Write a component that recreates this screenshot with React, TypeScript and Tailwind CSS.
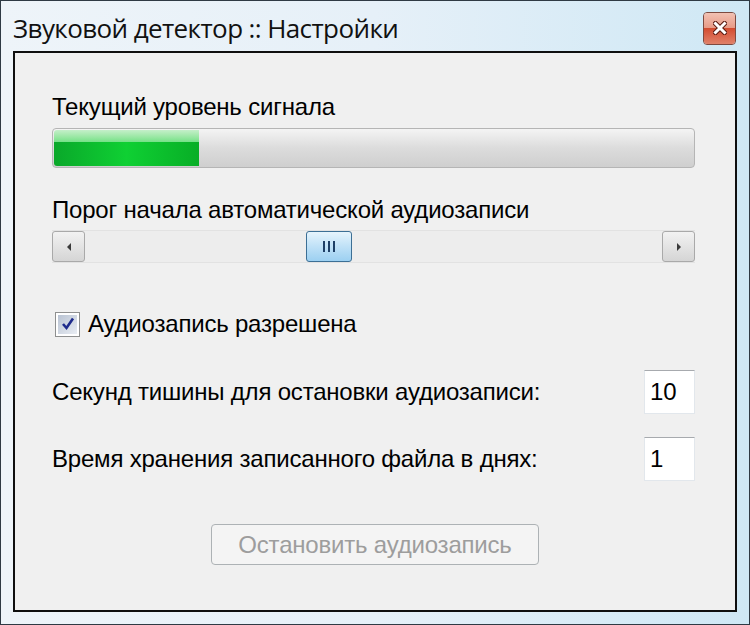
import React from "react";

const bodyFont = { fontFamily: '"Liberation Sans", Arial, sans-serif' };

function ArrowLeft() {
  return (
    <svg width="8" height="12" viewBox="0 0 8 12">
      <path d="M6 2 L2 6 L6 10 Z" fill="#3a3a3a" />
    </svg>
  );
}
function ArrowRight() {
  return (
    <svg width="8" height="12" viewBox="0 0 8 12">
      <path d="M2 2 L6 6 L2 10 Z" fill="#3a3a3a" />
    </svg>
  );
}

export default function App() {
  return (
    <div className="w-[750px] h-[625px] bg-[#2f3a44] p-[1px]">
      <div className="w-full h-full flex flex-col bg-gradient-to-r from-[#eef4f9] via-[#e6f0f8] to-[#cfe8f5]">
        {/* Title bar */}
        <div className="h-[50px] flex items-center justify-between pl-[12px] pr-[13px]">
          <div
            className="text-[26px] text-[#111] tracking-[-0.6px] leading-none mt-[4px]"
            style={{ fontFamily: '"Open Sans", "Liberation Sans", sans-serif' }}
          >
            Звуковой детектор :: Настройки
          </div>
          <div className="w-[33px] h-[33px] rounded-[4px] border border-[#7d4a40] overflow-hidden flex flex-col relative mt-[4px]">
            <div className="h-1/2 bg-gradient-to-b from-[#f2c1b3] to-[#e79a86]" />
            <div className="h-1/2 bg-gradient-to-b from-[#d24a2e] to-[#e0816a]" />
            <div className="absolute inset-0 flex items-center justify-center">
              <svg width="14" height="14" viewBox="0 0 14 14">
                <path d="M2.5 2.5 L11.5 11.5 M11.5 2.5 L2.5 11.5" stroke="#5a1a10" strokeWidth="5" strokeLinecap="square" />
                <path d="M2.5 2.5 L11.5 11.5 M11.5 2.5 L2.5 11.5" stroke="#ffffff" strokeWidth="3" strokeLinecap="square" />
              </svg>
            </div>
          </div>
        </div>
        {/* Content */}
        <div className="flex flex-1 px-[12px] pb-[12px]">
          <div
            className="flex-1 border-2 border-[#0f0f0f] bg-[#f0f0f0] pl-[37px] pr-[40px] flex flex-col"
            style={bodyFont}
          >
            <div className="mt-[40px] h-[28px] text-[24px] leading-[28px] text-black tracking-[-0.2px]">
              Текущий уровень сигнала
            </div>
            {/* progress */}
            <div className="mt-[7px] h-[40px] rounded-[4px] border border-[#b5b5b5] bg-gradient-to-b from-[#f4f4f4] via-[#dcdcdc] to-[#cfcfcf] p-[1px] flex">
              <div className="w-[145px] h-full rounded-l-[3px] flex flex-col overflow-hidden">
                <div className="h-[12px] bg-gradient-to-b from-[#c4efc9] to-[#74e187]" />
                <div className="flex-1 bg-gradient-to-r from-[#0aa82a] via-[#0fd033] to-[#08ae26]" />
              </div>
            </div>
            <div className="mt-[28px] h-[28px] text-[24px] leading-[28px] text-black tracking-[-0.2px]">
              Порог начала автоматической аудиозаписи
            </div>
            {/* scrollbar */}
            <div className="mt-[6px] h-[33px] flex items-stretch border-y border-[#e2e2e2] bg-[#ededed]">
              <div className="w-[33px] rounded-[3px] border border-[#a9a9a9] bg-gradient-to-b from-[#f2f2f2] to-[#d5d5d5] flex items-center justify-center">
                <ArrowLeft />
              </div>
              <div className="flex-1 flex items-stretch">
                <div className="w-[221px]" />
                <div className="w-[46px] rounded-[3px] border border-[#3c6f95] bg-gradient-to-b from-[#e6f4fc] via-[#bfe1f7] to-[#9cd0f1] flex items-center justify-center gap-[3px]">
                  <div className="w-[2px] h-[11px] bg-[#1d3f66]" />
                  <div className="w-[2px] h-[11px] bg-[#1d3f66]" />
                  <div className="w-[2px] h-[11px] bg-[#1d3f66]" />
                </div>
              </div>
              <div className="w-[33px] rounded-[3px] border border-[#a9a9a9] bg-gradient-to-b from-[#f2f2f2] to-[#d5d5d5] flex items-center justify-center">
                <ArrowRight />
              </div>
            </div>
            {/* checkbox */}
            <div className="mt-[47px] flex items-center h-[28px] pl-[3px]">
              <div className="w-[25px] h-[25px] border border-[#8e8f8f] bg-white p-[2px]">
                <div className="w-full h-full bg-gradient-to-br from-[#b9c3d3] to-[#e9edf3] flex items-center justify-center">
                  <svg width="16" height="16" viewBox="0 0 16 16">
                    <path d="M3 8 L6.5 12 L13 2.5" stroke="#1e2b8c" strokeWidth="2.6" fill="none" />
                  </svg>
                </div>
              </div>
              <div className="ml-[8px] text-[24px] leading-[28px] text-black tracking-[-0.2px]">
                Аудиозапись разрешена
              </div>
            </div>
            {/* row 1 */}
            <div className="mt-[32px] flex items-center justify-between h-[44px]">
              <div className="text-[24px] leading-[28px] text-black tracking-[-0.2px]">
                Секунд тишины для остановки аудиозаписи:
              </div>
              <div className="w-[51px] h-[44px] bg-white border border-[#e2e7ec] border-t-[#a7aaae] flex items-center pl-[5px] text-[24px] text-black">
                10
              </div>
            </div>
            {/* row 2 */}
            <div className="mt-[23px] flex items-center justify-between h-[44px]">
              <div className="text-[24px] leading-[28px] text-black tracking-[-0.2px]">
                Время хранения записанного файла в днях:
              </div>
              <div className="w-[51px] h-[44px] bg-white border border-[#e2e7ec] border-t-[#a7aaae] flex items-center pl-[5px] text-[24px] text-black">
                1
              </div>
            </div>
            {/* button */}
            <div className="mt-[43px] flex pl-[159px]">
              <div className="w-[328px] h-[41px] rounded-[4px] border border-[#adb2b5] bg-[#f4f4f4] flex items-center justify-center text-[24px] text-[#9d9d9d] tracking-[-0.2px]">
                Остановить аудиозапись
              </div>
            </div>
          </div>
        </div>
      </div>
    </div>
  );
}
